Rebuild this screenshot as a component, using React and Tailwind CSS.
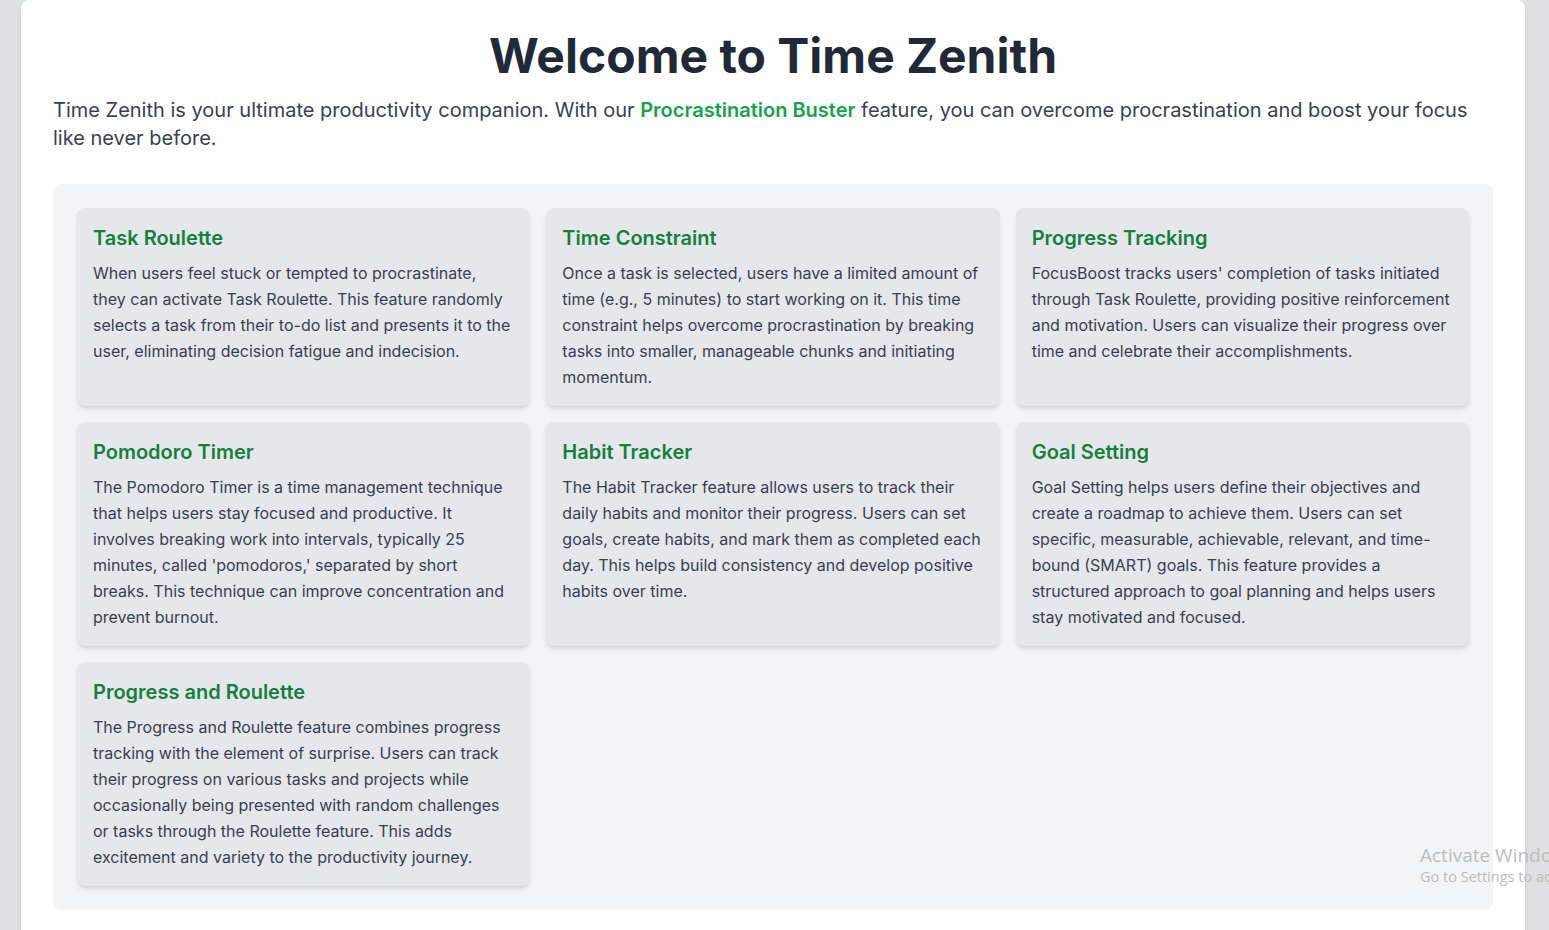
const features = [
  {
    title: "Task Roulette",
    body: "When users feel stuck or tempted to procrastinate, they can activate Task Roulette. This feature randomly selects a task from their to-do list and presents it to the user, eliminating decision fatigue and indecision.",
    pad: "pr-[3px]",
  },
  {
    title: "Time Constraint",
    body: "Once a task is selected, users have a limited amount of time (e.g., 5 minutes) to start working on it. This time constraint helps overcome procrastination by breaking tasks into smaller, manageable chunks and initiating momentum.",
  },
  {
    title: "Progress Tracking",
    body: "FocusBoost tracks users' completion of tasks initiated through Task Roulette, providing positive reinforcement and motivation. Users can visualize their progress over time and celebrate their accomplishments.",
  },
  {
    title: "Pomodoro Timer",
    body: "The Pomodoro Timer is a time management technique that helps users stay focused and productive. It involves breaking work into intervals, typically 25 minutes, called 'pomodoros,' separated by short breaks. This technique can improve concentration and prevent burnout.",
  },
  {
    title: "Habit Tracker",
    body: "The Habit Tracker feature allows users to track their daily habits and monitor their progress. Users can set goals, create habits, and mark them as completed each day. This helps build consistency and develop positive habits over time.",
  },
  {
    title: "Goal Setting",
    body: "Goal Setting helps users define their objectives and create a roadmap to achieve them. Users can set specific, measurable, achievable, relevant, and time-bound (SMART) goals. This feature provides a structured approach to goal planning and helps users stay motivated and focused.",
  },
  {
    title: "Progress and Roulette",
    body: "The Progress and Roulette feature combines progress tracking with the element of surprise. Users can track their progress on various tasks and projects while occasionally being presented with random challenges or tasks through the Roulette feature. This adds excitement and variety to the productivity journey.",
  },
];

export default function App() {
  return (
    <div className="relative h-[930px] overflow-hidden bg-[#dde1e2] font-['Inter',sans-serif]">
      <div className="ml-[21px] w-[1504px] min-h-[930px] rounded-t-lg bg-white p-8 shadow-md">
        <h1 className="text-center text-5xl font-bold leading-none text-[#1f2937]">
          Welcome to Time Zenith
        </h1>
        <p className="mt-4 text-xl leading-7 text-[#374151]">
          Time Zenith is your ultimate productivity companion. With our{" "}
          <span className="font-semibold text-[#16a34a]">Procrastination Buster</span> feature, you can
          overcome procrastination and boost your focus like never before.
        </p>

        <div className="mt-8 rounded-lg bg-[#f3f4f6] p-6">
          <div className="grid grid-cols-3 gap-4">
            {features.map((f) => (
              <div key={f.title} className="rounded-lg bg-[#e5e7eb] p-4 shadow-md">
                <h2 className="mb-2 text-xl font-semibold leading-7 text-[#15803d]">{f.title}</h2>
                <p className={`text-base leading-[26px] text-[#374151] ${f.pad || ""}`}>{f.body}</p>
              </div>
            ))}
          </div>
        </div>
      </div>

      {/* OS watermark */}
      <div className="pointer-events-none absolute left-[1420px] top-[843px] whitespace-nowrap font-['Open_Sans',sans-serif] text-[#bcbcbc]">
        <div className="text-[19px] leading-6">Activate Windows</div>
        <div className="text-[14.5px] leading-5">Go to Settings to activate Windows.</div>
      </div>
    </div>
  );
}
